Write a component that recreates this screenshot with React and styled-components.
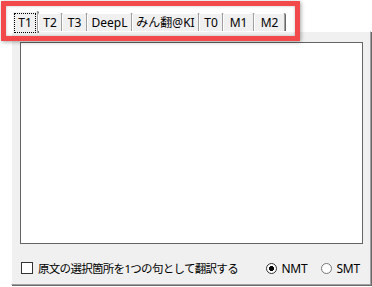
import React from "react";
import styled, { createGlobalStyle } from "styled-components";

const GlobalStyle = createGlobalStyle`
  html, body {
    margin: 0;
    padding: 0;
    background: #ffffff;
  }
  body {
    font-family: "Noto Sans", "Noto Sans CJK JP", sans-serif;
    font-size: 12px;
    color: #000;
  }
`;

const Window = styled.div`
  position: relative;
  width: 372px;
  height: 287px;
  box-sizing: border-box;
  padding: 11px 0 0 11px;
  background: #ffffff;
  overflow: hidden;
`;

const TabStrip = styled.div`
  position: relative;
  z-index: 1;
  display: flex;
  align-items: flex-end;
  height: 20px;
  padding-left: 1px;
`;

const Tab = styled.div`
  box-sizing: border-box;
  width: ${p => p.$w}px;
  height: ${p => (p.$active ? 22 : 18)}px;
  margin-bottom: ${p => (p.$active ? -2 : 0)}px;
  display: flex;
  align-items: center;
  justify-content: center;
  background: #f0f0f0;
  border-top: 1px solid #ffffff;
  border-left: 1px solid #ffffff;
  border-right: 1px solid #a0a0a0;
  box-shadow: 1px 0 0 #696969;
  border-radius: 2px 2px 0 0;
  white-space: nowrap;
  line-height: 14px;
`;

const FocusLabel = styled.span`
  outline: 1px dotted #000;
  outline-offset: 1px;
  padding: 1px 2px;
`;

const Panel = styled.div`
  box-sizing: border-box;
  width: 360px;
  height: 254px;
  padding: 10px 0 0 8px;
  background: #f0f0f0;
  border-top: 1px solid #ffffff;
  border-left: 1px solid #ffffff;
  border-right: 1px solid #a0a0a0;
  border-bottom: 1px solid #a0a0a0;
  box-shadow: 1px 1px 0 #696969;
`;

const TextBox = styled.textarea`
  display: block;
  box-sizing: border-box;
  width: 343px;
  height: 202px;
  margin: 0;
  padding: 2px;
  border: 1px solid #646464;
  background: #ffffff;
  resize: none;
  outline: none;
  font: inherit;
`;

const OptionRow = styled.div`
  display: flex;
  align-items: center;
  height: 24px;
  margin-top: 12px;
  padding-left: 1px;
  padding-right: 10px;
`;

const CheckBox = styled.span`
  box-sizing: border-box;
  width: 12px;
  height: 12px;
  border: 1px solid #333333;
  background: #ffffff;
  margin-right: 5px;
`;

const CheckLabel = styled.span`
  font-size: 11.5px;
  letter-spacing: -0.7px;
`;

const RadioGroup = styled.div`
  display: flex;
  align-items: center;
  gap: 14px;
  margin-left: auto;
`;

const RadioItem = styled.label`
  display: flex;
  align-items: center;
  gap: 4px;
  letter-spacing: -0.2px;
`;

const RadioDot = styled.span`
  box-sizing: border-box;
  width: 11px;
  height: 11px;
  border-radius: 50%;
  border: 1px solid ${p => (p.$checked ? "#333333" : "#777777")};
  background: ${p =>
    p.$checked
      ? "radial-gradient(circle, #000 0 2.2px, #fff 2.8px)"
      : "#ffffff"};
`;

const Highlight = styled.div`
  position: absolute;
  left: 1px;
  top: 1px;
  width: 299px;
  height: 40px;
  box-sizing: border-box;
  border: 5px solid #f24a4a;
  box-shadow: 1px 1px 4px rgba(0, 0, 0, 0.35), inset 0 0 3px rgba(0, 0, 0, 0.25);
  pointer-events: none;
`;

const tabs = [
  { label: "T1", w: 26 },
  { label: "T2", w: 24 },
  { label: "T3", w: 25 },
  { label: "DeepL", w: 45 },
  { label: "みん翻@KI", w: 67 },
  { label: "T0", w: 24 },
  { label: "M1", w: 31 },
  { label: "M2", w: 31 },
];

export default function App() {
  return (
    <>
      <GlobalStyle />
      <Window>
        <TabStrip>
          {tabs.map((t, i) => (
            <Tab key={t.label} $w={t.w} $active={i === 0}>
              {i === 0 ? <FocusLabel>{t.label}</FocusLabel> : t.label}
            </Tab>
          ))}
        </TabStrip>
        <Panel>
          <TextBox />
          <OptionRow>
            <CheckBox />
            <CheckLabel>原文の選択箇所を1つの句として翻訳する</CheckLabel>
            <RadioGroup>
              <RadioItem>
                <RadioDot $checked />
                NMT
              </RadioItem>
              <RadioItem>
                <RadioDot />
                SMT
              </RadioItem>
            </RadioGroup>
          </OptionRow>
        </Panel>
        <Highlight />
      </Window>
    </>
  );
}
